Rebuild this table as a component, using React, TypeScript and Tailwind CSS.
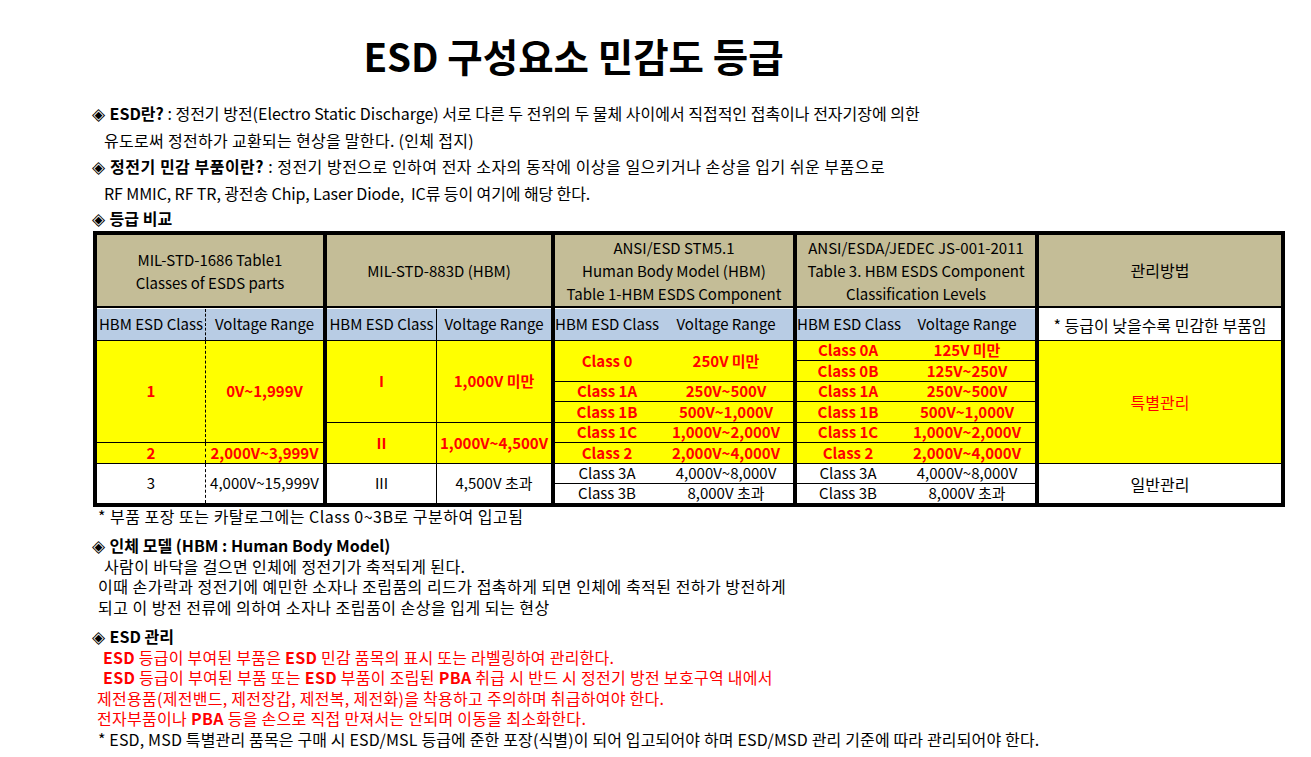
const tan = "bg-[#c4bd97]";
const red = "font-bold text-[#ff0000]";

const rows = "grid grid-rows-[19px_20px_19px_20px_19px_20px_19px_19px] gap-y-px bg-black h-[162px]";

function Dia() {
  return <span className="inline-block w-[14px] text-[17px] leading-none tracking-normal">◈</span>;
}

function Header({ lines }: { lines: string[] }) {
  return (
    <div className={`flex h-[73px] flex-col items-center justify-center border-b-2 border-black text-center leading-[23px] ${tan}`}>
      {lines.map((l) => (
        <div key={l} className="whitespace-nowrap">{l}</div>
      ))}
    </div>
  );
}

function Pair({ a, b, wa, wb, cls }: { a: string; b: string; wa: string; wb: string; cls: string }) {
  return (
    <div className={`flex items-center whitespace-nowrap ${cls}`}>
      <span className={`${wa} text-center`}>{a}</span>
      <span className={`${wb} text-center`}>{b}</span>
    </div>
  );
}

const jsRows = [
  ["Class 1A", "250V~500V"],
  ["Class 1B", "500V~1,000V"],
  ["Class 1C", "1,000V~2,000V"],
  ["Class 2", "2,000V~4,000V"],
];

export default function App() {
  return (
    <div className="min-h-[757px] w-[1311px] bg-white font-['Noto_Sans_CJK_KR',sans-serif] text-[16px] text-black">
      <h1 className="w-[1147px] pt-[32px] text-center text-[38.5px] font-bold leading-[46px]">
        ESD 구성요소 민감도 등급
      </h1>

      <div className="mt-[22px] pl-[92px] leading-[26.5px]">
        <p>
          <Dia /> <span className="font-bold">ESD란?</span> : 정전기 방전(Electro Static Discharge) 서로 다른 두 전위의 두 물체 사이에서 직접적인 접촉이나 전자기장에 의한
        </p>
        <p className="ml-[12px] tracking-[0.3px]">유도로써 정전하가 교환되는 현상을 말한다. (인체 접지)</p>
        <p className="tracking-[0.5px]">
          <Dia /> <span className="font-bold">정전기 민감 부품이란?</span> : 정전기 방전으로 인하여 전자 소자의 동작에 이상을 일으키거나 손상을 입기 쉬운 부품으로
        </p>
        <p className="ml-[12px] tracking-[-0.1px]">RF MMIC, RF TR, 광전송 Chip, Laser Diode,&nbsp; IC류 등이 여기에 해당 한다.</p>
        <p className="leading-[24px]">
          <Dia /> <span className="font-bold">등급 비교</span>
        </p>
      </div>

      <div className="ml-[93px] mt-px flex w-[1192px] border-4 border-black text-[15px]">
        {/* MIL-STD-1686 */}
        <div className="flex w-[226px] flex-col">
          <Header lines={["MIL-STD-1686 Table1", "Classes of ESDS parts"]} />
          <div className="grid h-[33px] grid-cols-[109px_117px] whitespace-nowrap border-t border-b border-t-white border-b-black bg-[#b8cce4]">
            <div className="flex items-center justify-center border-r border-dashed border-black">HBM ESD Class</div>
            <div className="flex items-center justify-center">Voltage Range</div>
          </div>
          <div className={`${rows} grid-cols-[109px_117px]`}>
            <div className={`row-span-5 flex items-center justify-center border-r border-dashed border-black bg-[#ffff00] ${red}`}>1</div>
            <div className={`row-span-5 flex items-center justify-center bg-[#ffff00] ${red}`}>0V~1,999V</div>
            <div className={`flex items-center justify-center border-r border-dashed border-black bg-[#ffff00] ${red}`}>2</div>
            <div className={`flex items-center justify-center bg-[#ffff00] ${red}`}>2,000V~3,999V</div>
            <div className="row-span-2 flex items-center justify-center border-r border-dashed border-black bg-white">3</div>
            <div className="row-span-2 flex items-center justify-center bg-white">4,000V~15,999V</div>
          </div>
        </div>

        {/* MIL-STD-883D */}
        <div className="flex w-[228px] flex-col border-l-4 border-black">
          <Header lines={["MIL-STD-883D (HBM)"]} />
          <div className="grid h-[33px] grid-cols-[110px_114px] whitespace-nowrap border-t border-b border-t-white border-b-black bg-[#b8cce4]">
            <div className="flex items-center justify-center border-r border-black">HBM ESD Class</div>
            <div className="flex items-center justify-center">Voltage Range</div>
          </div>
          <div className={`${rows} grid-cols-[110px_114px]`}>
            <div className={`row-span-4 flex items-center justify-center border-r border-black bg-[#ffff00] ${red}`}>I</div>
            <div className={`row-span-4 flex items-center justify-center bg-[#ffff00] ${red}`}>1,000V 미만</div>
            <div className={`row-span-2 flex items-center justify-center border-r border-black bg-[#ffff00] ${red}`}>II</div>
            <div className={`row-span-2 flex items-center justify-center whitespace-nowrap bg-[#ffff00] ${red}`}>1,000V~4,500V</div>
            <div className="row-span-2 flex items-center justify-center border-r border-black bg-white">III</div>
            <div className="row-span-2 flex items-center justify-center bg-white">4,500V 초과</div>
          </div>
        </div>

        {/* ANSI/ESD STM5.1 */}
        <div className="flex w-[242px] flex-col border-l-4 border-black">
          <Header lines={["ANSI/ESD STM5.1", "Human Body Model (HBM)", "Table 1-HBM ESDS Component"]} />
          <Pair a="HBM ESD Class" b="Voltage Range" wa="w-[104px]" wb="w-[134px]" cls="h-[33px] border-t border-b border-t-white border-b-black bg-[#b8cce4]" />
          <div className={`${rows} grid-cols-1`}>
            <Pair a="Class 0" b="250V 미만" wa="w-[104px]" wb="w-[134px]" cls={`row-span-2 bg-[#ffff00] ${red}`} />
            {jsRows.map(([a, b]) => (
              <Pair key={a} a={a} b={b} wa="w-[104px]" wb="w-[134px]" cls={`bg-[#ffff00] ${red}`} />
            ))}
            <Pair a="Class 3A" b="4,000V~8,000V" wa="w-[104px]" wb="w-[134px]" cls="bg-white" />
            <Pair a="Class 3B" b="8,000V 초과" wa="w-[104px]" wb="w-[134px]" cls="bg-white" />
          </div>
        </div>

        {/* JS-001-2011 */}
        <div className="flex w-[242px] flex-col border-l-4 border-black">
          <Header lines={["ANSI/ESDA/JEDEC JS-001-2011", "Table 3. HBM ESDS Component", "Classification Levels"]} />
          <Pair a="HBM ESD Class" b="Voltage Range" wa="w-[102px]" wb="w-[136px]" cls="h-[33px] border-t border-b border-t-white border-b-black bg-[#b8cce4]" />
          <div className={`${rows} grid-cols-1`}>
            <Pair a="Class 0A" b="125V 미만" wa="w-[102px]" wb="w-[136px]" cls={`bg-[#ffff00] ${red}`} />
            <Pair a="Class 0B" b="125V~250V" wa="w-[102px]" wb="w-[136px]" cls={`bg-[#ffff00] ${red}`} />
            {jsRows.map(([a, b]) => (
              <Pair key={a} a={a} b={b} wa="w-[102px]" wb="w-[136px]" cls={`bg-[#ffff00] ${red}`} />
            ))}
            <Pair a="Class 3A" b="4,000V~8,000V" wa="w-[102px]" wb="w-[136px]" cls="bg-white" />
            <Pair a="Class 3B" b="8,000V 초과" wa="w-[102px]" wb="w-[136px]" cls="bg-white" />
          </div>
        </div>

        {/* 관리방법 */}
        <div className="flex w-[246px] flex-col border-l-4 border-black text-[16px]">
          <Header lines={["관리방법"]} />
          <div className="flex h-[33px] items-center justify-center border-t border-b border-t-white border-b-black bg-white">
            * 등급이 낮을수록 민감한 부품임
          </div>
          <div className={`${rows} grid-cols-1`}>
            <div className="row-span-6 flex items-center justify-center bg-[#ffff00] text-[#ff0000]">특별관리</div>
            <div className="row-span-2 flex items-center justify-center bg-white">일반관리</div>
          </div>
        </div>
      </div>

      <div className="pl-[92px]">
        <p className="ml-[6px] leading-[19px] tracking-[0.5px]">* 부품 포장 또는 카탈로그에는 Class 0~3B로 구분하여 입고됨</p>

        <div className="mt-[9px] leading-[20.5px]">
          <p>
            <Dia /> <span className="font-bold">인체 모델 (HBM : Human Body Model)</span>
          </p>
          <p className="ml-[12px] tracking-[0.4px]">사람이 바닥을 걸으면 인체에 정전기가 축적되게 된다.</p>
          <p className="ml-[6px] tracking-[0.5px]">이때 손가락과 정전기에 예민한 소자나 조립품의 리드가 접촉하게 되면 인체에 축적된 전하가 방전하게</p>
          <p className="ml-[6px] tracking-[0.5px]">되고 이 방전 전류에 의하여 소자나 조립품이 손상을 입게 되는 현상</p>
        </div>

        <div className="mt-[9px] leading-[20.6px]">
          <p>
            <Dia /> <span className="font-bold">ESD 관리</span>
          </p>
          <p className="ml-[11px] tracking-[0.25px] text-[#ff0000]">
            <span className="font-bold">ESD</span> 등급이 부여된 부품은 <span className="font-bold">ESD</span> 민감 품목의 표시 또는 라벨링하여 관리한다.
          </p>
          <p className="ml-[11px] tracking-[0.3px] text-[#ff0000]">
            <span className="font-bold">ESD</span> 등급이 부여된 부품 또는 <span className="font-bold">ESD</span> 부품이 조립된 <span className="font-bold">PBA</span> 취급 시 반드 시 정전기 방전 보호구역 내에서
          </p>
          <p className="ml-[5px] tracking-[0.28px] text-[#ff0000]">제전용품(제전밴드, 제전장갑, 제전복, 제전화)을 착용하고 주의하며 취급하여야 한다.</p>
          <p className="ml-[5px] tracking-[0.3px] text-[#ff0000]">
            전자부품이나 <span className="font-bold">PBA</span> 등을 손으로 직접 만져서는 안되며 이동을 최소화한다.
          </p>
          <p className="ml-[6px] tracking-[0.15px]">* ESD, MSD 특별관리 품목은 구매 시 ESD/MSL 등급에 준한 포장(식별)이 되어 입고되어야 하며 ESD/MSD 관리 기준에 따라 관리되어야 한다.</p>
        </div>
      </div>
    </div>
  );
}
